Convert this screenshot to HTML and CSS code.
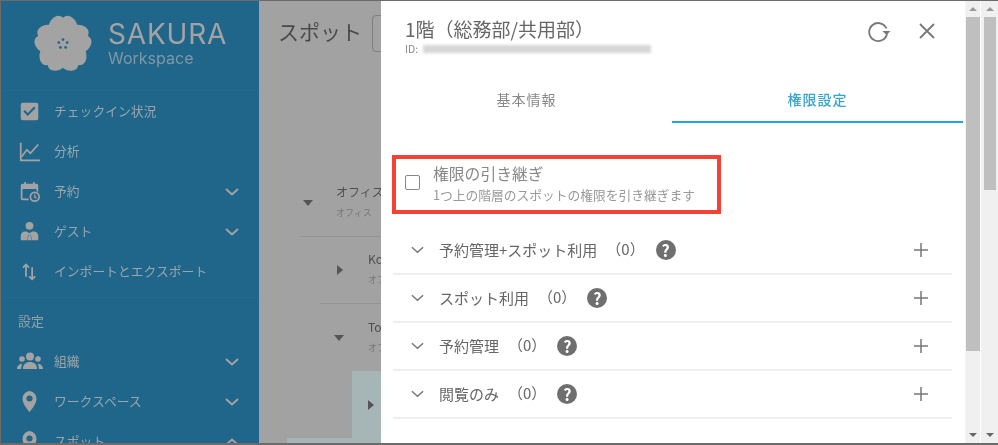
FILE: index.html

```html
<!DOCTYPE html>
<html lang="ja">
<head>
    <meta charset="UTF-8" />
    <title>スポット</title>
    <link rel="stylesheet" href="styles.css">
</head>
<body>
    <div class="app">
        <aside class="sidebar">
            <div class="brand">
                <svg class="brand-logo" viewBox="-31 -31 62 60">
                    <g fill="#a3a3a3">
                        <circle r="14"/>
                        <path id="petal" d="M0 0C-14-6-19-18-11-26-7-30-3-30 0-27 3-30 7-30 11-26 19-18 14-6 0 0z"/>
                        <use href="#petal" transform="rotate(72)"/>
                        <use href="#petal" transform="rotate(144)"/>
                        <use href="#petal" transform="rotate(216)"/>
                        <use href="#petal" transform="rotate(288)"/>
                    </g>
                    <g fill="#20658a"><circle cx="0" cy="-4.500" r="1.400"/><circle cx="-4.300" cy="-1.400" r="1.400"/><circle cx="4.300" cy="-1.400" r="1.400"/><circle cx="-2.700" cy="3.600" r="1.400"/><circle cx="2.700" cy="3.600" r="1.400"/></g>
                </svg>
                <div>
                    <div class="brand-name">SAKURA</div>
                    <div class="brand-sub">Workspace</div>
                </div>
            </div>
            <nav class="menu">
                <div class="menu-item">
                    <svg class="menu-icon" viewBox="0 0 24 24"><path d="M4 2h16a2 2 0 0 1 2 2v16a2 2 0 0 1-2 2H4a2 2 0 0 1-2-2V4a2 2 0 0 1 2-2zm6 15 9-9-1.700-1.700L10 13.600 6.700 10.300 5 12z" fill-rule="evenodd"/></svg>
                    <span>チェックイン状況</span>
                </div>
                <div class="menu-item">
                    <svg class="menu-icon" viewBox="0 0 24 24"><path d="M2 2v20h22" class="line"/><path d="M3 18l6-8 4 4 9-10" class="line"/></svg>
                    <span>分析</span>
                </div>
                <div class="menu-item">
                    <svg class="menu-icon" viewBox="0 0 24 24"><path d="M6 1h2v2h8V1h2v2h2a2 2 0 0 1 2 2v7h-2V9H4v11h7v2H4a2 2 0 0 1-2-2V5a2 2 0 0 1 2-2h2z"/><circle cx="18" cy="18" r="5" class="line"/><path d="M18 15.500v3l2 1.200" class="thin"/></svg>
                    <span>予約</span>
                    <svg class="chevron" viewBox="0 0 14 8"><path d="M1 1l6 5.500L13 1"/></svg>
                </div>
                <div class="menu-item">
                    <svg class="menu-icon" viewBox="0 0 24 24"><circle cx="12" cy="5.500" r="4.500"/><path d="M2 22v-5c0-3 2-5 5-5h2l3 2 3-2h2c3 0 5 2 5 5v5h-7.500l-1-7h-3l-1 7zM11 15h2l1 7h-4z"/></svg>
                    <span>ゲスト</span>
                    <svg class="chevron" viewBox="0 0 14 8"><path d="M1 1l6 5.500L13 1"/></svg>
                </div>
                <div class="menu-item">
                    <svg class="menu-icon" viewBox="0 0 24 24"><path d="M8 18V4M4.500 7.500 8 4l3.500 3.500M15 7v14M11.500 17.500 15 21l3.500-3.500" class="line"/></svg>
                    <span>インポートとエクスポート</span>
                </div>
            </nav>
            <div class="menu-title">設定</div>
            <nav class="menu">
                <div class="menu-item">
                    <svg class="menu-icon wide" viewBox="0 0 26 18"><circle cx="13" cy="4.500" r="4"/><circle cx="5" cy="7" r="2.800"/><circle cx="21" cy="7" r="2.800"/><path d="M6 17c0-5 3-7 7-7s7 2 7 7zM0 17c0-3 2-5 5-5l-1 5zM26 17c0-3-2-5-5-5l1 5z"/></svg>
                    <span>組織</span>
                    <svg class="chevron" viewBox="0 0 14 8"><path d="M1 1l6 5.500L13 1"/></svg>
                </div>
                <div class="menu-item">
                    <svg class="menu-icon" viewBox="0 0 24 24"><path d="M12 0a9 9 0 0 0-8 9c0 6 8 15 8 15s8-9 8-15a9 9 0 0 0-8-9zm0 12a3.500 3.500 0 1 1 0-7 3.500 3.500 0 0 1 0 7z" fill-rule="evenodd"/></svg>
                    <span>ワークスペース</span>
                    <svg class="chevron" viewBox="0 0 14 8"><path d="M1 1l6 5.500L13 1"/></svg>
                </div>
                <div class="menu-item">
                    <svg class="menu-icon" viewBox="0 0 24 24"><path d="M12 0a9 9 0 0 0-8 9c0 6 8 15 8 15s8-9 8-15a9 9 0 0 0-8-9zm0 12a3.500 3.500 0 1 1 0-7 3.500 3.500 0 0 1 0 7z" fill-rule="evenodd"/></svg>
                    <span>スポット</span>
                    <svg class="chevron" viewBox="0 0 14 8"><path d="M1 7l6-5.500L13 7"/></svg>
                </div>
            </nav>
        </aside>

        <main class="main">
            <div class="main-head">
                <h1>スポット</h1>
                <div class="search-box"></div>
            </div>
            <div class="tree">
                <div class="tree-row depth-0">
                    <span class="caret down"></span>
                    <div><div class="tree-name">オフィス</div><div class="tree-sub">オフィス</div></div>
                </div>
                <div class="tree-row depth-1">
                    <span class="caret right"></span>
                    <div><div class="tree-name">Kobe</div><div class="tree-sub">オフィス</div></div>
                </div>
                <div class="tree-row depth-1b">
                    <span class="caret down"></span>
                    <div><div class="tree-name">Tokyo</div><div class="tree-sub">オフィス</div></div>
                </div>
                <div class="tree-row selected">
                    <span class="caret right"></span>
                </div>
                <div class="tree-rest"></div>
            </div>

            <section class="drawer">
                <div class="drawer-body">
                    <div class="drawer-head">
                        <div class="drawer-titles">
                            <div class="drawer-title">1階（総務部/共用部）</div>
                            <div class="drawer-id">ID:<span class="id-mask"></span></div>
                        </div>
                        <svg class="head-icon refresh" viewBox="0 0 24 24"><path d="M19.500 9.500A9 9 0 1 0 20 15"/><path d="M15.500 12h8l-4 4z" class="solid"/></svg>
                        <svg class="head-icon close" viewBox="0 0 24 24"><path d="M5 5l14 14M19 5 5 19"/></svg>
                    </div>
                    <div class="tabs">
                        <div class="tab">基本情報</div>
                        <div class="tab active">権限設定</div>
                    </div>
                    <div class="inherit-box">
                        <span class="checkbox"></span>
                        <div>
                            <div class="inherit-title">権限の引き継ぎ</div>
                            <div class="inherit-sub">1つ上の階層のスポットの権限を引き継ぎます</div>
                        </div>
                    </div>
                    <div class="perm-list">
                        <div class="perm-row">
                            <svg class="perm-chevron" viewBox="0 0 14 8"><path d="M1 1l6 5.500L13 1"/></svg>
                            <span class="perm-name">予約管理+スポット利用</span><span class="perm-count">（0）</span>
                            <span class="help">?</span>
                            <svg class="plus" viewBox="0 0 16 16"><path d="M8 1v14M1 8h14"/></svg>
                        </div>
                        <div class="perm-row">
                            <svg class="perm-chevron" viewBox="0 0 14 8"><path d="M1 1l6 5.500L13 1"/></svg>
                            <span class="perm-name">スポット利用</span><span class="perm-count">（0）</span>
                            <span class="help">?</span>
                            <svg class="plus" viewBox="0 0 16 16"><path d="M8 1v14M1 8h14"/></svg>
                        </div>
                        <div class="perm-row">
                            <svg class="perm-chevron" viewBox="0 0 14 8"><path d="M1 1l6 5.500L13 1"/></svg>
                            <span class="perm-name">予約管理</span><span class="perm-count">（0）</span>
                            <span class="help">?</span>
                            <svg class="plus" viewBox="0 0 16 16"><path d="M8 1v14M1 8h14"/></svg>
                        </div>
                        <div class="perm-row">
                            <svg class="perm-chevron" viewBox="0 0 14 8"><path d="M1 1l6 5.500L13 1"/></svg>
                            <span class="perm-name">閲覧のみ</span><span class="perm-count">（0）</span>
                            <span class="help">?</span>
                            <svg class="plus" viewBox="0 0 16 16"><path d="M8 1v14M1 8h14"/></svg>
                        </div>
                    </div>
                </div>
                <div class="scrollbar inner">
                    <span class="arrow up"></span>
                    <div class="track"><div class="thumb"></div></div>
                    <span class="arrow dn"></span>
                </div>
                <div class="scrollbar outer">
                    <span class="arrow up"></span>
                    <div class="track"><div class="thumb"></div></div>
                    <span class="arrow dn"></span>
                </div>
            </section>
        </main>
    </div>
</body>
</html>
```

FILE: styles.css

```css
* { box-sizing: border-box; }
html, body { margin: 0; height: 100%; overflow: hidden; }
body { font-family: "Noto Sans CJK JP", "Noto Sans", sans-serif; background: #a2a2a2; color: #666; }

.app { display: flex; width: 998px; height: 445px; border: 1px solid #6b6b6b; border-width: 1px 0 2px 1px; overflow: hidden; filter: blur(0.35px); }

/* sidebar */
.sidebar { width: 258px; flex: none; background: #20658a; color: #9aa6ac; overflow: hidden; }
.brand { display: flex; align-items: center; gap: 15px; height: 90px; padding-left: 32px; border-bottom: 1px solid #246a8e; }
.brand-logo { width: 60px; height: 58px; margin-top: -6px; flex: none; }
.brand-name { font-family: Inter, sans-serif; font-size: 28px; line-height: 30px; letter-spacing: 0.8px; color: #a3a3a3; margin-top: -4px; }
.brand-sub { font-family: Inter, sans-serif; font-size: 16px; line-height: 19px; color: #7f98a6; }
.menu-item { display: flex; align-items: center; height: 40px; padding: 0 20px 0 18px; font-size: 12.800px; }
.menu-item span { margin: 0 0 2px 14px; flex: 1; }
.menu-icon { width: 21px; height: 21px; fill: #a3a3a3; flex: none; }
.menu-icon.wide { width: 26px; height: 18px; margin-left: -2px; margin-right: -3px; }
.menu-icon .line { fill: none; stroke: #a3a3a3; stroke-width: 2; }
.menu-icon .thin { fill: none; stroke: #a3a3a3; stroke-width: 1.500; }
.chevron { width: 14px; height: 8px; margin-top: 2px; fill: none; stroke: #a3a3a3; stroke-width: 2; flex: none; }
.menu-title { height: 44px; padding: 13px 0 0 17px; margin-top: 6px; border-top: 1px solid #246a8e; font-size: 13px; color: #8fa3ae; }

/* main area behind the drawer */
.main { position: relative; flex: 1; background: #a2a2a2; overflow: hidden; }
.main-head { display: flex; align-items: flex-start; height: 169px; padding: 14px 0 0 19px; }
.main-head h1 { margin: 0; font-size: 21px; line-height: 32px; font-weight: 400; color: #4a4a4a; }
.search-box { width: 60px; height: 37px; margin-left: 10px; border: 1px solid #7f7f7f; border-radius: 4px; }
.tree-row { display: flex; align-items: center; height: 67px; border-bottom: 1px solid #939393; color: #4f4f4f; }
.tree-name { font-size: 12px; line-height: 16px; margin-top: -2px; }
.tree-sub { font-size: 9px; line-height: 14px; color: #777; margin-top: 6px; }
.depth-0 { margin-left: 42px; }
.depth-0 .caret { margin-left: 2px; margin-right: 23px; }
.depth-1 { margin-left: 61px; padding-left: 17px; }
.depth-1 .caret { margin-right: 25px; }
.depth-1b { margin-left: 61px; padding-left: 14px; border-bottom: 0; }
.depth-1b .caret { margin-right: 24px; }
.selected { margin-left: 93px; padding-left: 16px; background: #a6b6b6; border-bottom: 0; }
.tree-rest { height: 20px; margin-left: 28px; background: #a6b6b6; }
.caret { width: 0; height: 0; flex: none; border-style: solid; }
.caret.down { border-width: 6px 5.500px 0; border-color: #555 transparent transparent; }
.caret.right { border-width: 5.500px 0 5.500px 6px; border-color: transparent transparent transparent #555; }

/* drawer over the main area */
.drawer { position: absolute; left: 122px; right: 0; top: 0; bottom: 0; display: flex; background: #fff; }
.drawer-body { flex: 1; min-width: 0; overflow: hidden; padding-right: 2px; }
.drawer-head { display: flex; align-items: flex-start; height: 73px; padding: 13px 24px 0 24px; }
.drawer-titles { flex: 1; }
.drawer-title { font-size: 19px; line-height: 30px; color: #666; }
.drawer-id { display: flex; align-items: center; font-size: 10.500px; line-height: 11px; color: #888; margin-top: -1px; }
.id-mask { width: 228px; height: 8px; margin-left: 5px; background: #d6d6d6; filter: blur(1.500px); }
.head-icon { width: 24px; height: 24px; margin-top: 5px; fill: none; stroke: #777; stroke-width: 1.800; }
.head-icon .solid { fill: #777; stroke: none; }
.refresh { margin-right: 24px; }
.tabs { display: flex; height: 49px; margin-bottom: 32px; }
.tab { flex: 1; height: 49px; padding-top: 15px; text-align: center; font-size: 14px; line-height: 20px; letter-spacing: 1px; color: #888; }
.tab.active { color: #38a3cb; border-bottom: 2px solid #22a6d8; font-weight: 500; }
.inherit-box { display: flex; align-items: center; gap: 13px; width: 329px; height: 59px; margin-left: 11px; padding-left: 9px; border: 4px solid #f44336; }
.checkbox { width: 15px; height: 15px; border: 1.500px solid #888; border-radius: 2px; flex: none; margin-top: -4px; }
.inherit-title { font-size: 15.800px; line-height: 20px; color: #888; margin-top: -3px; }
.inherit-sub { font-size: 12.750px; line-height: 15px; color: #999; margin-top: 3px; }
.perm-list { margin: 13px 0 0 12px; width: 559px; }
.perm-row { display: flex; align-items: center; height: 48px; padding-left: 18px; border-bottom: 2px solid #efefef; }
.perm-chevron { width: 13px; height: 8px; fill: none; stroke: #777; stroke-width: 1.600; flex: none; margin-right: 15px; }
.perm-name { font-size: 15px; color: #666; margin-bottom: 2px; }
.perm-count { font-size: 15px; color: #666; margin: 0 0 4px 9px; }
.help { width: 20px; height: 20px; margin-left: 11px; border-radius: 50%; background: #6f6f6f; color: #fff; text-align: center; font-size: 16px; line-height: 20px; font-weight: 700; }
.plus { width: 16px; height: 16px; margin-left: auto; margin-right: 23px; fill: none; stroke: #777; stroke-width: 1.500; }

/* scrollbars */
.scrollbar { display: flex; flex-direction: column; align-items: center; background: #f0f0f0; flex: none; }
.scrollbar.inner { width: 15px; border-left: 1px solid #f4f4f4; margin-right: 1px; }
.scrollbar.outer { width: 17px; }
.track { flex: 1; width: 100%; }
.inner .thumb { width: 100%; height: 334px; background: #bfbfbf; }
.outer .thumb { width: 12px; margin: 0 auto; height: 173px; background: #bfbfbf; }
.arrow { width: 0; height: 0; margin: 6px 0; flex: none; border-style: solid; }
.arrow.up { border-width: 0 4px 4px; border-color: transparent transparent #999; }
.arrow.dn { border-width: 4px 4px 0; border-color: #666 transparent transparent; }
```
